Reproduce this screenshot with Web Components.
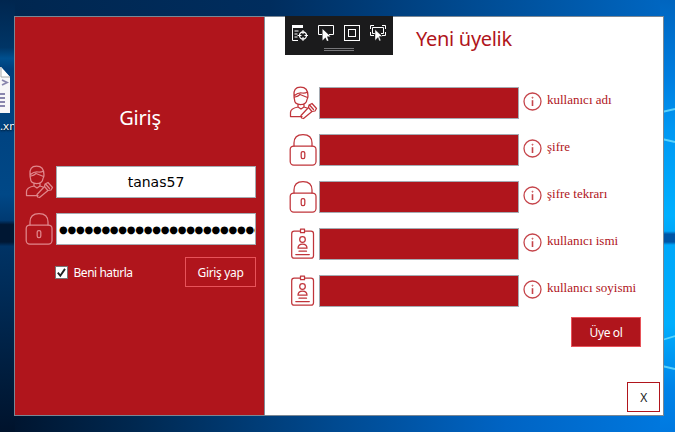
<!DOCTYPE html>
<html lang="tr">
<head>
<meta charset="utf-8">
<title>Giriş</title>
<style>
html,body{margin:0;padding:0}
body{width:675px;height:432px;overflow:hidden;font-family:"Noto Sans","Open Sans",sans-serif;--red:#b0151c}
</style>
</head>
<body>
<desk-top>
  <file-icon slot="icon">.xml</file-icon>
  <app-window>
    <login-panel slot="login"></login-panel>
    <signup-panel slot="signup"></signup-panel>
    <debug-bar slot="overlay"></debug-bar>
  </app-window>
</desk-top>
<script>
const define = (name, html) => customElements.define(name, class extends HTMLElement {
  constructor() {
    super();
    const t = document.createElement('template');
    t.innerHTML = typeof html === 'function' ? html(this) : html;
    this.attachShadow({mode: 'open'}).append(t.content.cloneNode(true));
  }
});

const glyphs = {
  user: `<path d="M5 10Q4 1.200 11.500 1.200T19 10Q19 12 18 13.500Q17.500 18.500 11.500 18.500T5.500 13.500Q5 12 5 10ZM5.500 9.500Q9 6.500 13 7Q16 7.500 18.500 6M6 11Q9 10.500 11 8.500L18.500 11.500M9 18v3l3 2 3-2v-3M9 21Q1.500 22.500 1.500 26.500V30.500H13M15 21l3 1"/><path d="M19.500 21.500l.5-2.500 3-1.500 4.500 5-1.500 2.500-3 .5-8.500 7-2-.5-.5-2.500zM21 19.500l3.500 4M20 22l2.500 3"/>`,
  lock: `<rect x="1.200" y="13" width="25.800" height="19" rx="3.500"/><path d="M5 13V10Q5 1.500 14 1.500T23 10v3"/><rect x="12.200" y="18.500" width="3.600" height="7" rx="1.600"/>`,
  badge: `<rect x="2.700" y="4.200" width="21.800" height="27" rx="2.500"/><rect x="11.500" y="2" width="4" height="3.700" fill="#fff"/><circle cx="13.500" cy="12.500" r="2.800"/><path d="M9 21.200Q9 17 13.500 17T18 21.200ZM10 24.200h7.500M6.800 27.500h13.500"/>`
};

define('line-icon', el => `
<style>:host{display:block;width:30px;height:34px;flex:none}svg{display:block;fill:none;stroke:currentColor;stroke-width:1.250;stroke-linejoin:round;stroke-linecap:round}</style>
<svg width="30" height="34" viewBox="0 0 30 34">${glyphs[el.getAttribute('name')]}</svg>`);

define('info-icon', `
<style>:host{display:block;width:19px;height:19px;flex:none;color:#c5444a}svg{display:block}</style>
<svg width="19" height="19" viewBox="0 0 19 19" fill="none" stroke="currentColor"><circle cx="9.500" cy="9.500" r="8.500" stroke-width="1.300"/><path d="M9.500 8.200v5.800" stroke-width="1.600"/><circle cx="9.500" cy="5.700" r=".5"/></svg>`);

define('text-field', `
<style>:host{display:flex;align-items:center;justify-content:var(--align,center);box-sizing:border-box;width:200px;height:32px;flex:none;border:1px solid #a5abb2;background:var(--fill,#fff);color:#000;font:14px/20px "DejaVu Sans",sans-serif;overflow:hidden;white-space:nowrap}</style><slot></slot>`);

define('push-button', `
<style>:host{display:flex;align-items:center;justify-content:center;box-sizing:border-box;height:30px;flex:none;background:var(--red);border:1px solid #e8535a;color:#fff;font-size:12px;line-height:16px;letter-spacing:-.35px}span{position:relative;top:1px}</style><span><slot></slot></span>`);

define('check-box', `
<style>:host{display:flex;align-items:center;gap:5.500px;color:#fff;font-size:12px;line-height:16px;letter-spacing:-.46px}
svg{display:block}span{position:relative;top:1px}</style>
<svg width="13" height="13" viewBox="0 0 13 13"><rect x=".5" y=".5" width="12" height="12" fill="#fff" stroke="#777"/><path d="M2.800 6.700L5.300 9.700 10 2.900" fill="none" stroke="#222" stroke-width="1.900"/></svg><span><slot></slot></span>`);

define('login-panel', `
<style>
:host{display:flex;flex-direction:column;box-sizing:border-box;width:250px;height:100%;background:var(--red);border-right:1px solid #7f8b98;padding:87px 8px 0 10px;color:#fff}
h1{margin:0 0 34px;font-size:20px;line-height:28px;font-weight:400;text-align:center;padding-right:1px;letter-spacing:-.25px}
.row{display:flex;align-items:flex-start;gap:1px;margin-bottom:13px;height:34px}
line-icon{color:#e0878c;margin-top:-1px}
.pw{--align:flex-start}
.dots{font-size:10px;letter-spacing:-.25px;padding-left:2px;line-height:20px;position:relative;top:1px}
.foot{display:flex;justify-content:space-between;align-items:center;padding-left:30px;margin-top:-3px}
push-button{width:71px}
</style>
<h1>Giriş</h1>
<div class="row"><line-icon name="user"></line-icon><text-field>tanas57</text-field></div>
<div class="row"><line-icon name="lock"></line-icon><text-field class="pw"><span class="dots">●●●●●●●●●●●●●●●●●●●●●●●●</span></text-field></div>
<div class="foot"><check-box>Beni hatırla</check-box><push-button>Giriş yap</push-button></div>`);

define('form-row', el => `
<style>:host{display:flex;align-items:flex-start;height:47px;color:var(--red)}
text-field{--fill:var(--red);margin:0 4px 0 0}
line-icon{margin-top:-1px;color:#c0343a}
info-icon{margin:5px 5px 0 0}
span{font:13px/16px "Liberation Serif",serif;margin-top:5px;white-space:nowrap}</style>
<line-icon name="${el.getAttribute('icon')}"></line-icon><text-field></text-field><info-icon></info-icon><span><slot></slot></span>`);

define('signup-panel', `
<style>
:host{display:flex;flex-direction:column;box-sizing:border-box;flex:1;height:100%;background:#fff;color:var(--red);padding:8px 3px 3px 24px}
h1{margin:0 0 34px;padding-left:127px;font-size:20px;line-height:28px;font-weight:400;letter-spacing:-.3px}
.send{width:70px;align-self:flex-end;margin:-5px 19px 0 0;border-color:#e8535a}
.close{width:33px;margin:auto 0 0;align-self:flex-end;background:#fff;color:#222;border-color:var(--red);font-size:12px}
</style>
<h1>Yeni üyelik</h1>
<form-row icon="user">kullanıcı adı</form-row>
<form-row icon="lock">şifre</form-row>
<form-row icon="lock">şifre tekrarı</form-row>
<form-row icon="badge">kullanıcı ismi</form-row>
<form-row icon="badge">kullanıcı soyismi</form-row>
<push-button class="send">Üye ol</push-button>
<push-button class="close">X</push-button>`);

define('debug-bar', `
<style>:host{display:flex;flex-direction:column;align-items:center;box-sizing:border-box;width:108px;height:39px;background:#1b1b1c;padding-top:9px}
.icons{display:flex;gap:10px}
svg{display:block;fill:none;stroke:#fff}
.grip{width:30px;height:1px;border:solid #77777a;border-width:1px 0;margin-top:7px}</style>
<div class="icons">
<svg width="16" height="16"><path d="M0 1.500h11" stroke-width="3"/><path d="M.5 2v13.500H6M2.500 6h4M2.500 9h3M2.500 12h3"/><circle cx="11" cy="10.500" r="3.500" stroke-width="1.300"/><path d="M11 5v4M11 12v4M5.500 10.500h4M12.500 10.500h4"/></svg>
<svg width="16" height="16"><path d="M4 9.500H.5v-9h15v9H11"/><path d="M4.500 4v11.500l3-3 1.500 3.500 1.500-.5-1.500-4h3.500z" fill="#fff" stroke="none"/></svg>
<svg width="16" height="16"><rect x=".5" y=".5" width="15" height="15"/><rect x="4.500" y="4.500" width="7" height="7"/></svg>
<svg width="16" height="16"><path d="M.5 4V.5H4M12 .5h3.500V4M.5 7v3.500H4M12 10.500h3.500V7M5 8.500H2.500v-6h11v6H11"/><path d="M5 4.500v11l3-3 1.300 3.500 1.500-.5-1.500-4h3.200z" fill="#fff" stroke="#1b1b1c" stroke-width=".4"/></svg>
</div><div class="grip"></div>`);

define('app-window', `
<style>:host{display:flex;box-sizing:border-box;width:650px;height:400px;border:1px solid #7a8794;position:relative}
.over{position:absolute;left:270px;top:-1px}</style>
<slot name="login"></slot><slot name="signup"></slot><div class="over"><slot name="overlay"></slot></div>`);

define('file-icon', `
<style>:host{display:block;color:#fff;font:11.500px/16px "Noto Sans",sans-serif;text-shadow:0 1px 2px #000}
svg{display:block;margin-bottom:5px}span{white-space:nowrap}</style>
<svg width="12" height="46"><path d="M0 0h1l9 10v36H0z" fill="#f7f6f8"/><path d="M1 0v10h9" fill="#fff" stroke="#aaa"/><path d="M2 13l5 2.500L2 18" fill="none" stroke="#8985ad" stroke-width="1.800"/><path d="M0 27h5M0 31h5M0 35h5M0 39h5" stroke="#8985ad" stroke-width="2"/></svg><span><slot></slot></span>`);

define('desk-top', `
<style>:host{display:block;box-sizing:border-box;width:675px;height:432px;padding:16px 11px 16px 14px;position:relative;isolation:isolate}
.bg{position:absolute;left:0;top:0;z-index:-1;display:block}
.icon{position:absolute;left:0;top:67px;width:14px;overflow:hidden}</style>
<svg class="bg" width="675" height="432">
<defs>
<linearGradient id="t"><stop offset="0" stop-color="#00264f"/><stop offset=".4" stop-color="#002d5e"/><stop offset=".7" stop-color="#004b92"/><stop offset="1" stop-color="#0068c4"/></linearGradient>
<linearGradient id="b"><stop offset="0" stop-color="#00132c"/><stop offset=".2" stop-color="#002850"/><stop offset=".5" stop-color="#004a91"/><stop offset=".75" stop-color="#0064c4"/><stop offset="1" stop-color="#0079e0"/></linearGradient>
<linearGradient id="l" x2="0" y2="1"><stop offset="0" stop-color="#00264f"/><stop offset=".11" stop-color="#003566"/><stop offset=".135" stop-color="#00508f"/><stop offset=".16" stop-color="#003f7c"/><stop offset=".45" stop-color="#004887"/><stop offset=".51" stop-color="#003a72"/><stop offset=".52" stop-color="#001733"/><stop offset=".56" stop-color="#001733"/><stop offset=".57" stop-color="#003365"/><stop offset="1" stop-color="#00132c"/></linearGradient>
<linearGradient id="r" x2="0" y2="1"><stop offset="0" stop-color="#0065bf"/><stop offset=".18" stop-color="#007ee0"/><stop offset=".3" stop-color="#0098f3"/><stop offset=".5" stop-color="#00b0ff"/><stop offset=".535" stop-color="#00a8fa"/><stop offset=".542" stop-color="#0056a6"/><stop offset=".56" stop-color="#0056a6"/><stop offset=".567" stop-color="#00a8fa"/><stop offset=".75" stop-color="#00aefd"/><stop offset=".9" stop-color="#0083e8"/><stop offset="1" stop-color="#0079e0"/></linearGradient>
</defs>
<path d="M0 0h675v20H0z" fill="url(#t)"/><path d="M0 410h675v22H0z" fill="url(#b)"/><path d="M0 0h15v432H0z" fill="url(#l)"/><path d="M660 0h15v432h-15z" fill="url(#r)"/>
<path d="M662 112l13-3M662 139l13 3M662 340l13-4M662 366l13 3" stroke="#6fe0ff" stroke-width="1.800" opacity=".8"/>
</svg>
<div class="icon"><slot name="icon"></slot></div>
<slot></slot>`);
</script>
</body>
</html>
